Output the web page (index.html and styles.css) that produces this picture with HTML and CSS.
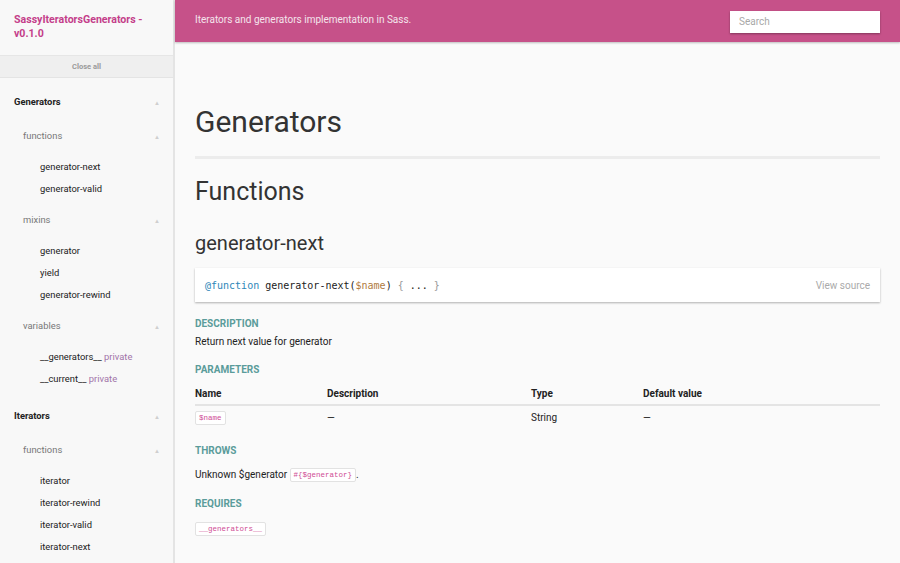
FILE: index.html
```html
<!DOCTYPE html>
<html lang="en">
<head>
<meta charset="utf-8">
<title>SassyIteratorsGenerators - v0.1.0</title>
<link rel="stylesheet" href="styles.css">
</head>
<body>
<div class="page">
  <aside class="sidebar">
    <div class="sb-title">SassyIteratorsGenerators - v0.1.0</div>
    <div class="close-all">Close all</div>
    <nav class="nav">
      <div class="group">
        <div class="group-head"><span>Generators</span><span class="arrow">&#9650;</span></div>
        <div class="sub">
          <div class="sub-head"><span>functions</span><span class="arrow">&#9650;</span></div>
          <ul class="items">
            <li>generator-next</li>
            <li>generator-valid</li>
          </ul>
        </div>
        <div class="sub">
          <div class="sub-head"><span>mixins</span><span class="arrow">&#9650;</span></div>
          <ul class="items">
            <li>generator</li>
            <li>yield</li>
            <li>generator-rewind</li>
          </ul>
        </div>
        <div class="sub">
          <div class="sub-head"><span>variables</span><span class="arrow">&#9650;</span></div>
          <ul class="items">
            <li>__generators__ <span class="private">private</span></li>
            <li>__current__ <span class="private">private</span></li>
          </ul>
        </div>
      </div>
      <div class="group">
        <div class="group-head"><span>Iterators</span><span class="arrow">&#9650;</span></div>
        <div class="sub">
          <div class="sub-head"><span>functions</span><span class="arrow">&#9650;</span></div>
          <ul class="items">
            <li>iterator</li>
            <li>iterator-rewind</li>
            <li>iterator-valid</li>
            <li>iterator-next</li>
          </ul>
        </div>
      </div>
    </nav>
  </aside>
  <div class="main">
    <header class="topbar">
      <p class="tagline">Iterators and generators implementation in Sass.</p>
      <div class="search">Search</div>
    </header>
    <section class="content">
      <h1 class="h1">Generators</h1>
      <h2 class="h2">Functions</h2>
      <h3 class="h3">generator-next</h3>
      <div class="code-box">
        <code class="sig"><span class="kw">@function</span> generator-next(<span class="var">$name</span>) <span class="br">{</span> ... <span class="br">}</span></code>
        <span class="view-source">View source</span>
      </div>
      <h4 class="label first">DESCRIPTION</h4>
      <p class="text">Return next value for generator</p>
      <h4 class="label">PARAMETERS</h4>
      <table class="params">
        <thead>
          <tr><th class="c1">Name</th><th class="c2">Description</th><th class="c3">Type</th><th>Default value</th></tr>
        </thead>
        <tbody>
          <tr><td><span class="chip">$name</span></td><td>—</td><td>String</td><td>—</td></tr>
        </tbody>
      </table>
      <h4 class="label throws">THROWS</h4>
      <p class="text spaced">Unknown $generator <span class="chip">#{$generator}</span>.</p>
      <h4 class="label requires">REQUIRES</h4>
      <p class="text spaced-more"><span class="chip">__generators__</span></p>
    </section>
  </div>
</div>
</body>
</html>
```

FILE: styles.css
```css
* { box-sizing: border-box; }
html, body { margin: 0; padding: 0; }
body {
  font-family: Roboto, "Liberation Sans", Arial, sans-serif;
  background: #fafafa;
  color: #222;
  width: 900px;
  height: 563px;
  overflow: hidden;
}
.page { display: flex; height: 563px; }

.sidebar {
  width: 175px;
  flex: none;
  background: #f8f8f8;
  border-right: 2px solid #e4e4e4;
  height: 563px;
  overflow: hidden;
}
.sb-title {
  height: 56px;
  padding: 13px 14px 0 14px;
  color: #c43e8a;
  font-weight: 700;
  font-size: 10.6px;
  line-height: 14px;
  border-bottom: 1px solid #e6e6e6;
}
.close-all {
  height: 22px;
  background: #efefef;
  border-bottom: 1px solid #e4e4e4;
  text-align: center;
  font-size: 7.5px;
  font-weight: 700;
  color: #9a9a9a;
  line-height: 22px;
}
.nav { padding-top: 11px; }
.group-head, .sub-head {
  display: flex;
  justify-content: space-between;
  align-items: center;
  padding-right: 13px;
}
.group-head {
  padding-left: 14px;
  font-weight: 700;
  font-size: 9.4px;
  color: #222;
  height: 24px;
  margin-bottom: 10px;
}
.sub-head {
  padding-left: 23px;
  font-size: 9.4px;
  color: #777;
  height: 24px;
  margin-bottom: 9px;
}
.arrow { font-size: 6px; color: #cfcfcf; padding-top: 3px; }
.items { list-style: none; margin: 0 0 7px 0; padding: 0 0 0 40px; }
.items li {
  font-size: 9.4px;
  color: #222;
  height: 22px;
  line-height: 22px;
}
.private { color: #a274a9; }
.group + .group { padding-top: 6px; }

.main { flex: 1; min-width: 0; }
.topbar {
  height: 42px;
  background: #c65189;
  box-shadow: 0 1px 2px rgba(0,0,0,0.25);
  display: flex;
  align-items: center;
  justify-content: space-between;
  padding: 0 20px;
  position: relative;
}
.tagline {
  margin: 0 0 3px 0;
  color: #f4e4ec;
  font-size: 10px;
}
.search {
  width: 150px;
  height: 22px;
  background: #fff;
  box-shadow: 0 1px 2px rgba(0,0,0,0.35);
  color: #a8a8a8;
  font-size: 10px;
  line-height: 22px;
  padding-left: 9px;
  margin-top: 1px;
}
.content { padding: 0 20px; }
.h1 {
  margin: 0;
  padding-top: 60px;
  font-size: 30px;
  font-weight: 400;
  color: #333;
  line-height: 40px;
  padding-bottom: 14px;
  border-bottom: 3px solid #ececec;
}
.h2 {
  margin: 18px 0 0 0;
  font-size: 25px;
  font-weight: 400;
  color: #333;
  line-height: 30px;
}
.h3 {
  margin: 23px 0 0 0;
  font-size: 20px;
  font-weight: 400;
  color: #333;
  line-height: 26px;
}
.code-box {
  margin-top: 12px;
  height: 34px;
  background: #fff;
  box-shadow: 0 1px 2px rgba(0,0,0,0.3);
  display: flex;
  align-items: center;
  justify-content: space-between;
  padding: 0 10px;
}
.sig {
  font-family: "DejaVu Sans Mono", "Liberation Mono", monospace;
  font-size: 10px;
  color: #222;
  white-space: pre;
}
.kw { color: #2c86b8; }
.var { color: #b07b3e; }
.br { color: #999; }
.view-source { font-size: 10px; color: #aaa; }
.label {
  margin: 14px 0 0 0;
  font-size: 10px;
  font-weight: 700;
  color: #5a9c9a;
  line-height: 13px;
}
.label.first { margin-top: 15px; }
.label.throws { margin-top: 19px; }
.label.requires { margin-top: 15px; }
.text {
  margin: 5px 0 0 0;
  font-size: 10px;
  line-height: 14px;
  color: #222;
}
.text.spaced { margin-top: 11px; }
.text.spaced-more { margin-top: 12px; }
.params {
  width: 100%;
  border-collapse: collapse;
  margin-top: 10px;
  font-size: 10px;
}
.params th {
  text-align: left;
  font-weight: 700;
  padding: 2px 0 4px 0;
  border-bottom: 2px solid #e4e4e4;
  line-height: 12px;
}
.params td { padding: 5px 0 0 0; line-height: 14px; }
.c1 { width: 132px; }
.c2 { width: 204px; }
.c3 { width: 112px; }
.chip {
  display: inline-block;
  font-family: "Liberation Mono", "Courier New", monospace;
  font-size: 7.5px;
  color: #cf4d95;
  background: #fff;
  border: 1px solid #e2e2e2;
  border-radius: 2px;
  padding: 0 3px;
  line-height: 12px;
  vertical-align: 1px;
}
```
